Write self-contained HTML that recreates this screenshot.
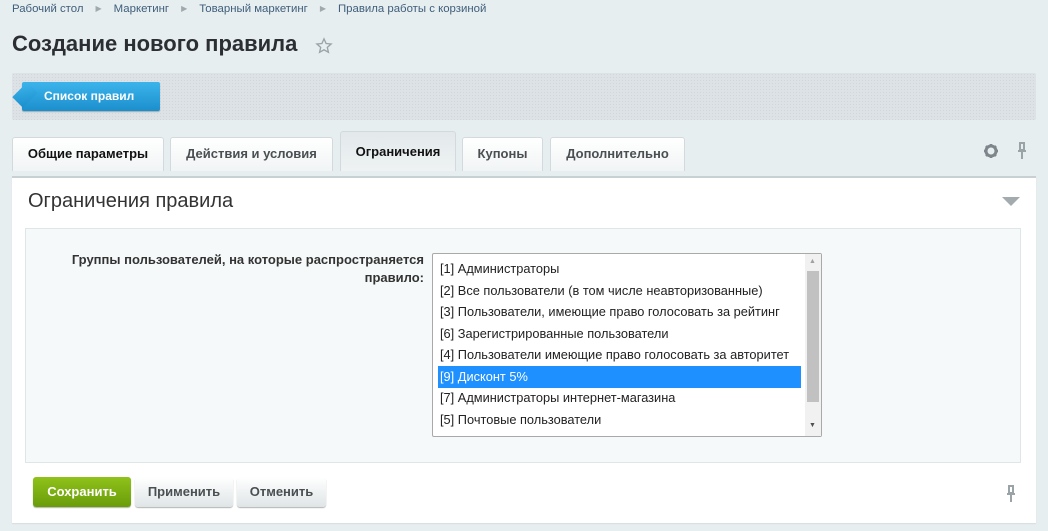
<!DOCTYPE html>
<html><head><meta charset="utf-8"><style>
*{box-sizing:border-box;margin:0;padding:0}
body{width:1048px;height:531px;background:#e7eef0;font-family:"Liberation Sans",sans-serif;position:relative;overflow:hidden;color:#000}
.abs{position:absolute}
.bc{top:3px;left:12px;font-size:11.4px;color:#3f5e7a;white-space:nowrap}
.bc span.s{color:#a0a9ae;margin:0 12px;font-size:8px;position:relative;top:-1px}
h1{position:absolute;left:12px;top:31px;font-size:22px;font-weight:bold;color:#2b2f33}
.tb{left:12px;top:73px;width:1024px;height:47px;background:#dce2e5;background-image:radial-gradient(#d0d6d9 0.6px,transparent 0.7px);background-size:3px 3px;border-radius:2px}
.bl{left:22px;top:82px;width:138px;height:29px;background:linear-gradient(#3cb4eb,#1b8fcd);border-radius:2px;color:#fff;font-weight:bold;font-size:12px;line-height:28px;padding-left:22px;box-shadow:0 1px 1px rgba(0,0,0,.25)}
.bl:before{content:"";position:absolute;left:-7px;top:3px;width:20px;height:20px;background:linear-gradient(135deg,#3cb4eb,#1b8fcd);transform:rotate(45deg) scale(.75,1.05);transform-origin:center}
.tab{top:137px;height:34px;background:linear-gradient(#fff,#f1f4f5);border:1px solid #d3dadd;border-bottom:none;border-radius:3px 3px 0 0;font-size:13px;font-weight:bold;color:#4a4f52;text-align:center;line-height:32px}
.tab.a{top:131px;height:40px;background:linear-gradient(#e3e9eb,#eef2f3);line-height:40px;color:#111}
.panel{left:12px;top:176px;width:1024px;height:347px;background:#fff;border-top:2px solid #c9d0d3;box-shadow:0 1px 1px #d5dcdf}
.inner{left:25px;top:228px;width:996px;height:235px;background:#f5f9f9;border:1px solid #dfe6e8}
.lbl{right:624px;top:251px;text-align:right;font-size:13px;font-weight:bold;color:#333;line-height:18px}
.sel{left:432px;top:253px;width:390px;height:184px;background:#fff;border:1px solid #a9a9a9;border-radius:2px}
.opt{position:absolute;left:5px;width:363px;height:22px;font-size:12.8px;line-height:22px;padding-left:2px;color:#222;white-space:nowrap}
.opt.on{background:#1e90ff;color:#fff}
.btn{top:477px;height:30px;border-radius:3px;font-size:13px;font-weight:bold;text-align:center;line-height:29px;background:linear-gradient(#fff,#dfe5e7);color:#4a4f52;box-shadow:0 1px 1px rgba(0,0,0,.3)}
</style></head><body>
<div class="abs bc">Рабочий стол<span class="s">▶</span>Маркетинг<span class="s">▶</span>Товарный маркетинг<span class="s">▶</span>Правила работы с корзиной</div>
<h1>Создание нового правила</h1>
<svg class="abs" style="left:315px;top:37px" width="18" height="18" viewBox="0 0 24 24"><path d="M12 2.5l2.8 6.2 6.7.6-5.1 4.5 1.5 6.6L12 17l-5.9 3.4 1.5-6.6-5.1-4.5 6.7-.6z" fill="none" stroke="#9aa3a8" stroke-width="1.8"/></svg>
<div class="abs tb"></div>
<div class="abs bl">Список правил</div>
<div class="abs tab" style="left:12px;width:152px;color:#111">Общие параметры</div>
<div class="abs tab" style="left:170px;width:163px">Действия и условия</div>
<div class="abs tab a" style="left:340px;width:116px">Ограничения</div>
<div class="abs tab" style="left:462px;width:81px">Купоны</div>
<div class="abs tab" style="left:550px;width:135px">Дополнительно</div>
<svg class="abs" style="left:983px;top:143px" width="16" height="16" viewBox="0 0 16 16"><circle cx="8" cy="8" r="5" fill="none" stroke="#7d868b" stroke-width="3"/><g stroke="#7d868b" stroke-width="2.5"><path d="M8 1v3M8 12v3M1 8h3M12 8h3M3 3l2 2M11 11l2 2M3 13l2-2M11 5l2-2"/></g></svg>
<svg class="abs" style="left:1016px;top:142px" width="12" height="18" viewBox="0 0 12 18"><path d="M3 1h6M4 1v7h4V1M2 9h8M6 9v8" stroke="#9aa3a8" stroke-width="2" fill="none"/></svg>
<div class="abs panel"></div>
<div class="abs" style="left:28px;top:190px;font-size:20px;color:#333">Ограничения правила</div>
<svg class="abs" style="left:1002px;top:197px" width="18" height="10"><path d="M0 0h18L9 9z" fill="#a3abaf"/></svg>
<div class="abs inner"></div>
<div class="abs lbl">Группы пользователей, на которые распространяется<br>правило:</div>
<div class="abs sel">
<div class="opt" style="top:4px">[1] Администраторы</div>
<div class="opt" style="top:26px">[2] Все пользователи (в том числе неавторизованные)</div>
<div class="opt" style="top:47px">[3] Пользователи, имеющие право голосовать за рейтинг</div>
<div class="opt" style="top:69px">[6] Зарегистрированные пользователи</div>
<div class="opt" style="top:90px">[4] Пользователи имеющие право голосовать за авторитет</div>
<div class="opt on" style="top:112px">[9] Дисконт 5%</div>
<div class="opt" style="top:133px">[7] Администраторы интернет-магазина</div>
<div class="opt" style="top:155px">[5] Почтовые пользователи</div>
<div style="position:absolute;left:372px;top:0;width:16px;height:182px;background:#f1f1f1"></div>
<div style="position:absolute;left:374px;top:17px;width:12px;height:131px;background:#c1c1c1"></div>
<div style="position:absolute;left:376px;top:4px;font-size:7px;color:#a0a0a0">▲</div>
<div style="position:absolute;left:376px;top:168px;font-size:7px;color:#505050">▼</div>
</div>
<div class="abs btn" style="left:33px;width:98px;background:linear-gradient(#8fc21a,#6a9c0a);color:#fff">Сохранить</div>
<div class="abs btn" style="left:135px;width:98px">Применить</div>
<div class="abs btn" style="left:237px;width:89px">Отменить</div>
<svg class="abs" style="left:1005px;top:485px" width="12" height="18" viewBox="0 0 12 18"><path d="M3 1h6M4 1v7h4V1M2 9h8M6 9v8" stroke="#9aa3a8" stroke-width="2" fill="none"/></svg>
</body></html>
